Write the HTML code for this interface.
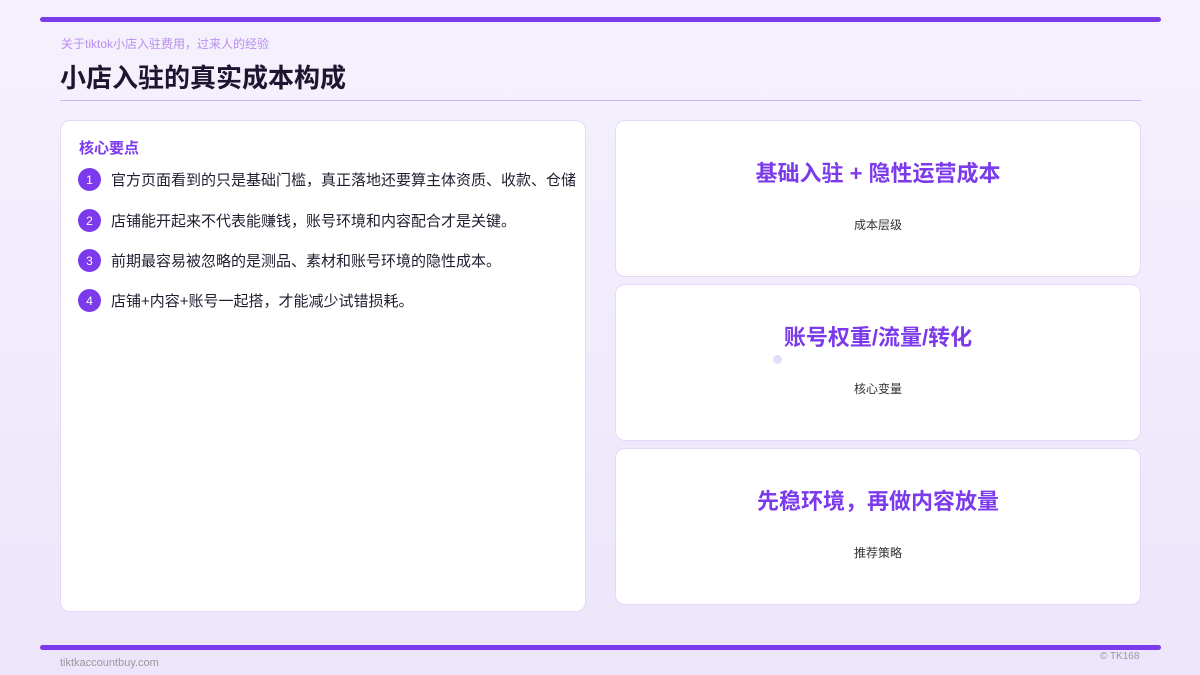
<!DOCTYPE html>
<html><head><meta charset="utf-8"><style>
*{margin:0;padding:0;box-sizing:border-box}
body{width:1200px;height:675px;overflow:hidden;position:relative;font-family:"Liberation Sans","Noto Sans CJK SC",sans-serif;background:linear-gradient(180deg,#f5f1fc 0%,#ede5fb 100%)}
.bar{position:absolute;left:40px;width:1121px;height:5px;background:#7c3aed;border-radius:3px}
.sub{position:absolute;left:61px;top:35px;font-size:12px;color:#b98ef0}
h1{position:absolute;left:60px;top:58px;font-size:26px;font-weight:bold;color:#1e1630;letter-spacing:0}
.hr{position:absolute;left:60px;top:100px;width:1081px;height:1px;background:#cdb3f6}
.card{position:absolute;background:#fff;border:1px solid #e4d9f8;border-radius:10px}
.kh{position:absolute;left:18px;top:16px;font-size:15px;font-weight:bold;color:#7c3aed}
.it{position:absolute;left:17px;font-size:15px;color:#221c2e;display:flex;align-items:center;white-space:nowrap}
.n{width:23px;height:23px;border-radius:50%;background:#7c3aed;color:#fff;font-size:12px;display:flex;align-items:center;justify-content:center;margin-right:10px}
.rt{position:absolute;left:0;right:0;text-align:center;font-size:22px;font-weight:bold;color:#7c3aed}
.rs{position:absolute;left:0;right:0;text-align:center;font-size:12px;color:#333}
</style></head><body>
<div class="bar" style="top:17px"></div>
<div class="sub">关于tiktok小店入驻费用，过来人的经验</div>
<h1>小店入驻的真实成本构成</h1>
<div class="hr"></div>
<div class="card" style="left:60px;top:120px;width:526px;height:492px">
<div class="kh">核心要点</div>
<div class="it" style="top:47px"><span class="n">1</span>官方页面看到的只是基础门槛，真正落地还要算主体资质、收款、仓储</div>
<div class="it" style="top:88px"><span class="n">2</span>店铺能开起来不代表能赚钱，账号环境和内容配合才是关键。</div>
<div class="it" style="top:128px"><span class="n">3</span>前期最容易被忽略的是测品、素材和账号环境的隐性成本。</div>
<div class="it" style="top:168px"><span class="n">4</span>店铺+内容+账号一起搭，才能减少试错损耗。</div>
</div>
<div class="card" style="left:615px;top:120px;width:526px;height:157px"><div class="rt" style="top:35px">基础入驻 + 隐性运营成本</div><div class="rs" style="top:95px">成本层级</div></div>
<div class="card" style="left:615px;top:284px;width:526px;height:157px"><div class="rt" style="top:35px">账号权重/流量/转化</div><div class="rs" style="top:95px">核心变量</div></div>
<div class="card" style="left:615px;top:448px;width:526px;height:157px"><div class="rt" style="top:35px">先稳环境，再做内容放量</div><div class="rs" style="top:95px">推荐策略</div></div>
<div style="position:absolute;left:773px;top:355px;width:9px;height:9px;border-radius:50%;background:#e6dcf8"></div>
<div class="bar" style="top:645px"></div>
<div style="position:absolute;left:60px;top:657px;font-size:11px;color:#999">tiktkaccountbuy.com</div>
<div style="position:absolute;left:1100px;top:651px;font-size:10px;color:#999">© TK168</div>
</body></html>
